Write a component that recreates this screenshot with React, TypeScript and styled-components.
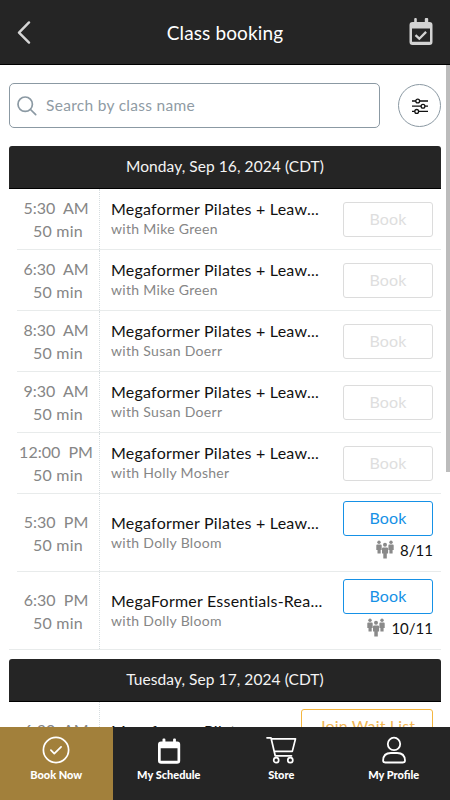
import React from "react";
import styled, { createGlobalStyle, css } from "styled-components";

const Global = createGlobalStyle`
  *, *::before, *::after { box-sizing: border-box; }
  body { margin: 0; background: #fff; font-family: "Lato", "Noto Sans", sans-serif; }
  button { font: inherit; background: none; border: 0; padding: 0; margin: 0; cursor: pointer; }
  svg { display: block; }
`;

const Screen = styled.div`
  width: 450px;
  height: 800px;
  display: flex;
  flex-direction: column;
  overflow: hidden;
  background: #fff;
`;

const TopBar = styled.header`
  flex: none;
  height: 65px;
  display: grid;
  grid-template-columns: 56px 1fr 56px;
  align-items: center;
  background: #252525;
  border-bottom: 1px solid #000;
`;

const Title = styled.h1`
  margin: 0;
  padding-top: 2px;
  text-align: center;
  color: #fff;
  font-size: 19px;
  line-height: 26px;
  font-weight: 400;
  letter-spacing: 0.12px;
`;

const IconButton = styled.button<{ $side: "left" | "right" }>`
  display: flex;
  height: 64px;
  align-items: center;
  ${(p) =>
    p.$side === "left"
      ? css`justify-content: flex-start; padding-left: 16px;`
      : css`justify-content: flex-end; padding-right: 16px;`}
`;

const Viewport = styled.main`
  flex: 1;
  min-height: 0;
  display: flex;
  overflow: hidden;
`;

const Content = styled.div`
  width: 446px;
  flex: none;
  padding: 18px 5px 0 9px;
`;

const ScrollTrack = styled.div`
  width: 4px;
  flex: none;
`;

const ScrollThumb = styled.div`
  height: 407px;
  background: #bcbcbc;
`;

const SearchRow = styled.div`
  display: flex;
  align-items: center;
  justify-content: space-between;
  height: 45px;
`;

const SearchField = styled.label`
  width: 371px;
  height: 45px;
  display: flex;
  align-items: center;
  gap: 9px;
  padding: 0 7px;
  border: 1px solid #8b99a3;
  border-radius: 5px;
`;

const SearchText = styled.span`
  color: #8f9ba4;
  font-size: 15.5px;
  line-height: 20px;
  letter-spacing: 0.3px;
  padding-bottom: 2px;
`;

const FilterButton = styled.button`
  && { border: 1px solid #8b99a3; }
  width: 43px;
  height: 43px;
  border-radius: 50%;
  display: flex;
  align-items: center;
  justify-content: center;
`;

const Day = styled.section<{ $gap: number }>`
  margin-top: ${(p) => p.$gap}px;
`;

const DayTitle = styled.h2`
  margin: 0;
  height: 43px;
  border-radius: 3px 3px 0 0;
  border-bottom: 1px solid #000;
  background: #252525;
  color: #f4f4f4;
  text-align: center;
  font-size: 15.5px;
  line-height: 41px;
  font-weight: 400;
  letter-spacing: 0.08px;
`;

const Row = styled.div<{ $tall: boolean; $last?: boolean }>`
  display: flex;
  height: ${(p) => (p.$tall ? 78 : 61)}px;
  margin-left: ${(p) => (p.$last ? 0 : 8)}px;
  padding-left: ${(p) => (p.$last ? 8 : 0)}px;
  border-bottom: 1px solid #e8ebeb;
`;

const TimeCell = styled.div`
  width: 83px;
  flex: none;
  display: flex;
  flex-direction: column;
  justify-content: center;
  align-items: center;
  padding: 0 4px 0 0;
  border-right: 1px dotted #d6dde0;
  color: #868686;
  font-size: 16px;
  line-height: 23px;
  white-space: pre;
`;

const Duration = styled.span`
  padding-left: 4px;
  letter-spacing: 0.2px;
`;

const InfoCell = styled.div`
  flex: 1;
  min-width: 0;
  display: flex;
  flex-direction: column;
  justify-content: center;
  padding: 0 0 2px 11px;
`;

const ClassName = styled.div`
  color: #111;
  font-size: 16px;
  line-height: 21px;
  letter-spacing: 0.22px;
  white-space: nowrap;
`;

const Teacher = styled.div`
  color: #868686;
  font-size: 14px;
  line-height: 19px;
  letter-spacing: 0.3px;
  white-space: nowrap;
`;

const ActionCell = styled.div`
  flex: none;
  display: flex;
  flex-direction: column;
  align-items: flex-end;
  justify-content: center;
  padding-right: 8px;
`;

type Tone = "off" | "book" | "wait";
const tones: Record<Tone, [string, string]> = {
  off: ["#dcdcdc", "#dedede"],
  book: ["#1691e6", "#1691e6"],
  wait: ["#f4b63f", "#f0b552"],
};

const ActionButton = styled.button<{ $tone: Tone }>`
  && {
    border: 1px solid ${(p) => tones[p.$tone][0]};
    color: ${(p) => tones[p.$tone][1]};
  }
  width: ${(p) => (p.$tone === "wait" ? 132 : 90)}px;
  height: 35px;
  border-radius: 3px;
  font-size: 16px;
  line-height: 32px;
  padding-bottom: 2px;
  letter-spacing: 0.15px;
`;

const Spots = styled.div`
  display: flex;
  align-items: center;
  gap: 6px;
  height: 22px;
  margin-top: 3px;
  margin-bottom: 4px;
  color: #111;
  font-size: 15px;
  letter-spacing: 0;
`;

const NavBar = styled.nav`
  flex: none;
  height: 73px;
  display: grid;
  grid-template-columns: repeat(4, 1fr);
  background: #252525;
`;

const NavItem = styled.button<{ $active?: boolean }>`
  && { background: ${(p) => (p.$active ? "#a2803b" : "#252525")}; }
  display: flex;
  flex-direction: column;
  align-items: center;
  padding-top: 9px;
  gap: 3px;
  color: #fff;
`;

const NavLabel = styled.span`
  font-size: 11px;
  line-height: 15px;
  font-weight: 900;
  letter-spacing: 0;
`;

const BackIcon = () => (
  <svg width="16" height="24" viewBox="0 0 16 24" fill="none" stroke="#d5d5d5" strokeWidth="2.4" strokeLinecap="round" strokeLinejoin="round">
    <path d="M13 2.4 3 12.6 13 22.6" />
  </svg>
);

const CalendarCheckIcon = () => (
  <svg width="26" height="28" viewBox="0 0 26 28">
    <path fill="#d3d3d3" fillRule="evenodd" d="M6.2 0h1.6q1 0 1 1v3h8V1q0-1 1-1h1.4q1 0 1 1v3h1.3q3 0 3 3v17q0 3-3 3h-17q-3 0-3-3V7q0-3 3-3h1.7V1q0-1 1-1ZM4 10.4v13.4h18V10.4Z" />
    <path d="m7.5 17.2 3.8 3.5 6.8-6.8" fill="none" stroke="#d3d3d3" strokeWidth="2.3" />
  </svg>
);

const SearchIcon = () => (
  <svg width="20" height="20" viewBox="0 0 20 20" fill="none" stroke="#8b99a3" strokeWidth="1.7" strokeLinecap="round">
    <circle cx="8.2" cy="8.2" r="7.2" />
    <path d="m13.5 13.5 5.2 5.2" />
  </svg>
);

const SlidersIcon = () => (
  <svg width="18" height="16" viewBox="0 0 18 16" fill="#fff" stroke="#111" strokeWidth="1.3">
    <path d="M1 3h16M1 8.2h16M1 13.4h16" />
    <circle cx="6.7" cy="3" r="1.9" />
    <circle cx="12" cy="8.2" r="1.9" />
    <circle cx="5.7" cy="13.4" r="1.9" />
  </svg>
);

const PeopleIcon = () => (
  <svg width="18" height="19" viewBox="0 0 18 19" fill="#8a8a8a">
    <circle cx="3" cy="2.2" r="1.7" />
    <path d="M1.2 4.4h3.6q.9 0 .9 1v4.7h-1v3.3H1.5v-3.3H.3V5.4q0-1 .9-1Z" />
    <circle cx="15" cy="2.2" r="1.7" />
    <path d="M13.2 4.4h3.6q.9 0 .9 1v4.7h-1.1v3.3h-3.2v-3.3h-1V5.4q0-1 .8-1Z" />
    <circle cx="9" cy="4.8" r="2" />
    <path d="M7.1 7.4h3.8q1.2 0 1.2 1.2v4.8h-1.3v5H7.3v-5H6V8.6q0-1.2 1.1-1.2Z" />
  </svg>
);

const CheckCircleIcon = () => (
  <svg width="28" height="28" viewBox="0 0 28 28" fill="none" stroke="#fff" strokeWidth="1.7" strokeLinecap="round" strokeLinejoin="round">
    <circle cx="14" cy="14" r="12.6" />
    <path d="m8.9 14.2 3.4 3.5 6.8-6.8" />
  </svg>
);

const CalendarIcon = () => (
  <svg width="28" height="28" viewBox="0 0 28 28" fill="#fff">
    <path fillRule="evenodd" d="M8.5 2.6h.9q1 0 1 1v2h7.7v-2q0-1 1-1h.8q1 0 1 1v2h1.3q3 0 3 3v16.2q0 3-3 3H6q-3 0-3-3V8.600q0-3 3-3h1.500v-2q0-1 1-1ZM5.700 12.300v12.400h16.800V12.300Z" />
  </svg>
);

const CartIcon = () => (
  <svg width="32" height="28" viewBox="0 0 32 28" fill="none" stroke="#fff" strokeWidth="1.7" strokeLinejoin="round" strokeLinecap="round">
    <path d="M2 1.800h4l4.200 18H26.500M6.300 2.800h24.200l-3.200 12.600H9.200" />
    <circle cx="11.200" cy="24.200" r="2.500" />
    <circle cx="25.300" cy="24.200" r="2.500" />
  </svg>
);

const ProfileIcon = () => (
  <svg width="28" height="28" viewBox="0 0 28 28" fill="none" stroke="#fff" strokeWidth="1.8" strokeLinejoin="round">
    <circle cx="14" cy="7.9" r="6.2" />
    <path d="M5.3 26.5q-2.2 0-2.2-2 .2-7.5 7.7-7.5h6.4q7.5 0 7.8 7.5 0 2-2.2 2Z" />
  </svg>
);

interface ClassItem {
  time: string;
  period: string;
  name: string;
  teacher: string;
  tone: Tone;
  spots?: string;
}

const name = "Megaformer Pilates + Leaw...";
const monday: ClassItem[] = [
  { time: "5:30", period: "AM", name, teacher: "Mike Green", tone: "off" },
  { time: "6:30", period: "AM", name, teacher: "Mike Green", tone: "off" },
  { time: "8:30", period: "AM", name, teacher: "Susan Doerr", tone: "off" },
  { time: "9:30", period: "AM", name, teacher: "Susan Doerr", tone: "off" },
  { time: "12:00", period: "PM", name, teacher: "Holly Mosher", tone: "off" },
  { time: "5:30", period: "PM", name, teacher: "Dolly Bloom", tone: "book", spots: "8/11" },
  { time: "6:30", period: "PM", name: "MegaFormer Essentials-Rea...", teacher: "Dolly Bloom", tone: "book", spots: "10/11" },
];
const tuesday: ClassItem[] = [
  { time: "6:30", period: "AM", name: "Megaformer Pilates...", teacher: "Mike Green", tone: "wait", spots: "11/11" },
];

const ClassRow = ({ item, last }: { item: ClassItem; last: boolean }) => (
  <Row $tall={!!item.spots} $last={last}>
    <TimeCell>
      <span>{`${item.time}  ${item.period}`}</span>
      <Duration>50 min</Duration>
    </TimeCell>
    <InfoCell>
      <ClassName>{item.name}</ClassName>
      <Teacher>with {item.teacher}</Teacher>
    </InfoCell>
    <ActionCell>
      <ActionButton $tone={item.tone}>{item.tone === "wait" ? "Join Wait List" : "Book"}</ActionButton>
      {item.spots && (
        <Spots>
          <PeopleIcon />
          {item.spots}
        </Spots>
      )}
    </ActionCell>
  </Row>
);

const DayList = ({ title, items, gap }: { title: string; items: ClassItem[]; gap: number }) => (
  <Day $gap={gap}>
    <DayTitle>{title}</DayTitle>
    {items.map((item, i) => (
      <ClassRow key={i} item={item} last={i === items.length - 1} />
    ))}
  </Day>
);

export default function App() {
  return (
    <>
      <Global />
      <Screen>
        <TopBar>
          <IconButton $side="left" aria-label="Back"><BackIcon /></IconButton>
          <Title>Class booking</Title>
          <IconButton $side="right" aria-label="Schedule"><CalendarCheckIcon /></IconButton>
        </TopBar>
        <Viewport>
          <Content>
            <SearchRow>
              <SearchField>
                <SearchIcon />
                <SearchText>Search by class name</SearchText>
              </SearchField>
              <FilterButton aria-label="Filters"><SlidersIcon /></FilterButton>
            </SearchRow>
            <DayList title="Monday, Sep 16, 2024 (CDT)" items={monday} gap={18} />
            <DayList title="Tuesday, Sep 17, 2024 (CDT)" items={tuesday} gap={9} />
          </Content>
          <ScrollTrack><ScrollThumb /></ScrollTrack>
        </Viewport>
        <NavBar>
          <NavItem $active><CheckCircleIcon /><NavLabel>Book Now</NavLabel></NavItem>
          <NavItem><CalendarIcon /><NavLabel>My Schedule</NavLabel></NavItem>
          <NavItem><CartIcon /><NavLabel>Store</NavLabel></NavItem>
          <NavItem><ProfileIcon /><NavLabel>My Profile</NavLabel></NavItem>
        </NavBar>
      </Screen>
    </>
  );
}
